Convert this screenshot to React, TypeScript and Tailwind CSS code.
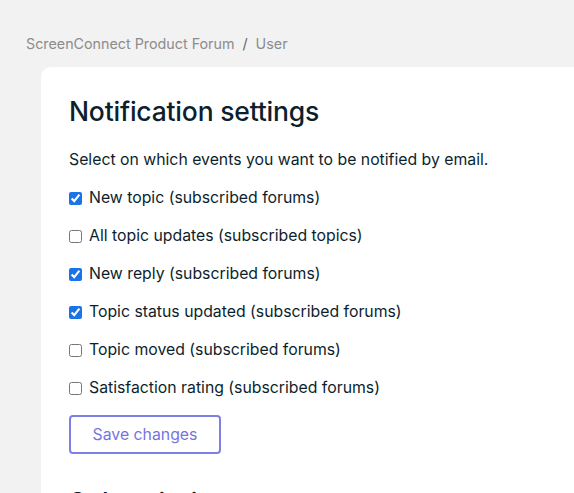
const options = [
  { label: 'New topic (subscribed forums)', checked: true },
  { label: 'All topic updates (subscribed topics)', checked: false },
  { label: 'New reply (subscribed forums)', checked: true },
  { label: 'Topic status updated (subscribed forums)', checked: true },
  { label: 'Topic moved (subscribed forums)', checked: false },
  { label: 'Satisfaction rating (subscribed forums)', checked: false },
];

export default function App() {
  return (
    <div className="h-[493px] bg-[#f2f2f2] overflow-hidden font-['Inter',sans-serif]">
      <nav className="pt-[34px] pl-[26px] text-[14.3px] text-[#8c8c8c] leading-[20px] flex items-center gap-[8px]">
        <span>ScreenConnect Product Forum</span>
        <span className="text-[#5c6470]">/</span>
        <span>User</span>
      </nav>
      <div className="ml-[41px] mt-[13px] w-[600px] bg-white rounded-tl-[10px] pl-[28px] pt-[27px] pb-[40px]">
        <h1 className="text-[26.5px] leading-[34px] font-medium text-[#0d1f2d] tracking-[-0.2px]">Notification settings</h1>
        <p className="mt-[22px] text-[15.8px] leading-[20px] text-[#0d1f2d]">Select on which events you want to be notified by email.</p>
        <div className="mt-[18px] flex flex-col gap-[18px]">
          {options.map(o => (
            <label key={o.label} className="flex items-center gap-[7px] text-[15.8px] leading-[20px] text-[#0d1f2d]">
              <input type="checkbox" defaultChecked={o.checked} className="w-[13px] h-[13px] m-0 accent-[#1a73e8]" />
              {o.label}
            </label>
          ))}
        </div>
        <button className="mt-[17px] w-[152px] h-[39px] border-2 border-[#7c80e4] rounded-[4px] text-[15.8px] text-[#7475de]">Save changes</button>
        <h2 className="mt-[31px] text-[26.5px] leading-[34px] font-medium text-[#0d1f2d]">Subscriptions</h2>
      </div>
    </div>
  );
}
